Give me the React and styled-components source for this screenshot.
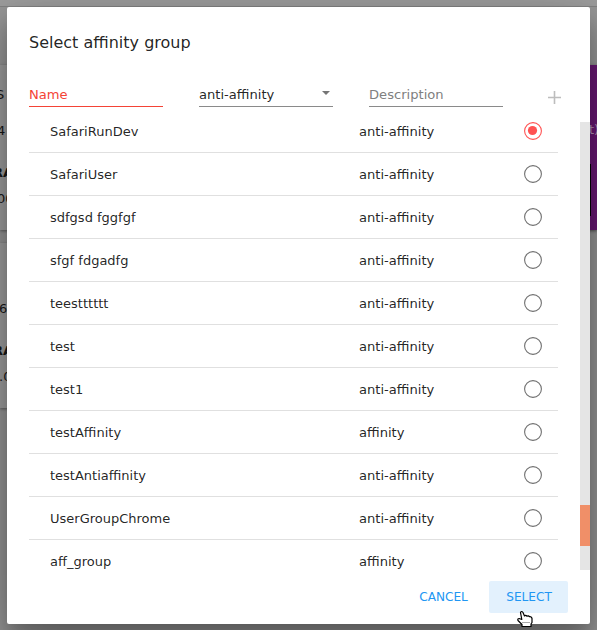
import React, { useState } from "react";
import styled, { createGlobalStyle, css } from "styled-components";

const GlobalStyle = createGlobalStyle`
  * { box-sizing: border-box; }
  html, body { margin: 0; height: 100%; overflow: hidden; }
  body { font-family: "DejaVu Sans", sans-serif; font-size: 13px; color: rgba(0, 0, 0, 0.87); }
`;

const Screen = styled.div`
  position: relative;
  width: 597px;
  height: 630px;
  overflow: hidden;
  background: #979797;
`;

const Page = styled.div`
  height: 100%;
  display: flex;
  flex-direction: column;
`;

const TopBar = styled.div`
  height: 7px;
  flex: none;
  background: #9c9c9c;
  border-bottom: 1px solid #828282;
`;

const Columns = styled.div`
  display: flex;
  justify-content: space-between;
  padding-top: 58px;
`;

const LeftColumn = styled.div`
  width: 40px;
  display: flex;
  flex-direction: column;
  gap: 13px;
`;

const Card = styled.div`
  height: 165px;
  padding-top: ${(p) => p.$top}px;
  background: #9f9f9f;
  box-shadow: 0 1px 3px rgba(0, 0, 0, 0.4);
  overflow: hidden;
`;

const CardLine = styled.div`
  height: ${(p) => p.$height}px;
  line-height: 16px;
  margin-left: ${(p) => p.$shift || 0}px;
  font-weight: ${(p) => (p.$bold ? 700 : 400)};
  color: #181818;
  white-space: nowrap;
`;

const PurpleCard = styled.div`
  width: 40px;
  height: 165px;
  padding: 57px 0 0 32px;
  background: #6a1875;
  box-shadow: 0 1px 3px rgba(0, 0, 0, 0.5);
  color: #b79abc;
  line-height: 16px;
  overflow: hidden;
`;

const CardBlock = styled.div`
  width: 2px;
  height: 52px;
  margin-top: 26px;
  background: #000;
`;

const Dialog = styled.div`
  position: absolute;
  left: 7px;
  top: 7px;
  width: 583px;
  height: 617px;
  display: flex;
  flex-direction: column;
  background: #fff;
  border-radius: 2px;
  box-shadow: 0 19px 60px rgba(0, 0, 0, 0.3), 0 15px 20px rgba(0, 0, 0, 0.22);
`;

const Title = styled.h1`
  margin: 0;
  height: 72px;
  padding: 25px 22px 0;
  font-size: 16px;
  font-weight: 400;
  line-height: 21px;
`;

const Form = styled.div`
  height: 43px;
  flex: none;
  padding: 0 22px;
  display: flex;
  align-items: flex-start;
  gap: 36px;
`;

const fieldText = css`
  width: 134px;
  height: 28px;
  padding: 4px 0 0;
  border: 0;
  font: 13.1px "DejaVu Sans", sans-serif;
`;

const Field = styled.input`
  ${fieldText}
  outline: none;
  background: none;
  border-bottom: 1px solid ${(p) => (p.$invalid ? "#f44336" : "#8a8a8a")};
  &::placeholder {
    color: ${(p) => (p.$invalid ? "#f44336" : "#808080")};
    opacity: 1;
  }
`;

const Select = styled.div`
  ${fieldText}
  display: flex;
  align-items: center;
  justify-content: space-between;
  padding-right: 3px;
  border-bottom: 1px solid #8a8a8a;
`;

const Caret = styled.i`
  margin-bottom: 3px;
  border: 4px solid transparent;
  border-top-color: #757575;
  border-bottom: 0;
`;

const AddButton = styled.button`
  width: 13px;
  height: 13px;
  margin: 12px 0 0 9px;
  padding: 0;
  border: 0;
  background: none;
  display: flex;
`;

const ListArea = styled.div`
  height: 448px;
  flex: none;
  display: flex;
  justify-content: space-between;
  overflow: hidden;
`;

const List = styled.div`
  width: 529px;
  margin: -12px 0 0 22px;
`;

const Row = styled.div`
  height: 43px;
  display: grid;
  grid-template-columns: 309px 165px 20px;
  align-items: center;
  padding-left: 21px;
  border-bottom: 1px solid #e0e0e0;
`;

const GroupType = styled.span`
  font-size: 13.1px;
`;

const Radio = styled.button`
  width: 18px;
  height: 18px;
  padding: 0;
  border: 0;
  background: none;
  display: flex;
  color: ${(p) => (p.$checked ? "#ff5252" : "#707070")};
`;

const Scrollbar = styled.div`
  width: 10px;
  padding-top: 383px;
  background: #e5e5e5;
`;

const Thumb = styled.div`
  height: 41px;
  background: #f08f68;
`;

const Actions = styled.div`
  display: flex;
  justify-content: flex-end;
  padding: 11px 22px 0;
`;

const Action = styled.button`
  width: ${(p) => p.$width}px;
  height: 32px;
  padding: 0 0 0 1px;
  border: 0;
  border-radius: 2px;
  background: ${(p) => (p.$active ? "#e3f1fd" : "transparent")};
  color: #2196f3;
  font: 12.1px "DejaVu Sans", sans-serif;
`;

const Pointer = styled.svg`
  position: absolute;
  left: 516px;
  top: 610px;
`;

const groups = [
  ["SafariRunDev", "anti-affinity"],
  ["SafariUser", "anti-affinity"],
  ["sdfgsd fggfgf", "anti-affinity"],
  ["sfgf fdgadfg", "anti-affinity"],
  ["teestttttt", "anti-affinity"],
  ["test", "anti-affinity"],
  ["test1", "anti-affinity"],
  ["testAffinity", "affinity"],
  ["testAntiaffinity", "anti-affinity"],
  ["UserGroupChrome", "anti-affinity"],
  ["aff_group", "affinity"],
];

export default function App() {
  const [selected, setSelected] = useState(0);
  return (
    <Screen>
      <GlobalStyle />
      <Page>
        <TopBar />
        <Columns>
          <LeftColumn>
            <Card $top={22}>
              <CardLine $height={36} $shift={-4}>S</CardLine>
              <CardLine $height={42} $shift={-3}>4</CardLine>
              <CardLine $height={26} $shift={-7} $bold>RAM</CardLine>
              <CardLine $height={20} $shift={-3}>00</CardLine>
            </Card>
            <Card $top={58}>
              <CardLine $height={42} $shift={-1}>6</CardLine>
              <CardLine $height={26} $shift={-7} $bold>RAM</CardLine>
              <CardLine $height={20} $shift={-1}>.0</CardLine>
            </Card>
          </LeftColumn>
          <PurpleCard>
            t)
            <CardBlock />
          </PurpleCard>
        </Columns>
      </Page>
      <Dialog>
        <Title>Select affinity group</Title>
        <Form>
          <Field placeholder="Name" $invalid />
          <Select>anti-affinity<Caret /></Select>
          <Field placeholder="Description" />
          <AddButton aria-label="Add">
            <svg width="13" height="13" viewBox="0 0 13 13">
              <path d="M6.5 0v13M0 6.5h13" stroke="#bdbdbd" strokeWidth="1.6" />
            </svg>
          </AddButton>
        </Form>
        <ListArea>
          <List>
            {groups.map(([name, type], i) => (
              <Row key={name}>
                <span>{name}</span>
                <GroupType>{type}</GroupType>
                <Radio $checked={i === selected} onClick={() => setSelected(i)} aria-label={name}>
                  <svg width="18" height="18" viewBox="0 0 18 18">
                    <circle cx="9" cy="9" r="8.4" fill="none" stroke="currentColor" strokeWidth="1.1" />
                    {i === selected && <circle cx="8.5" cy="8.5" r="4.6" fill="currentColor" />}
                  </svg>
                </Radio>
              </Row>
            ))}
          </List>
          <Scrollbar><Thumb /></Scrollbar>
        </ListArea>
        <Actions>
          <Action $width={92}>CANCEL</Action>
          <Action $width={79} $active>SELECT</Action>
        </Actions>
      </Dialog>
      <Pointer width="18" height="18" viewBox="0 0 18 18">
        <path
          d="M4.5 2.5Q5.5.5 7 2.5L8.5 6Q9.5 4.8 11 6.2Q12.3 5.2 13.4 6.7Q15.5 6.2 16 8.5V12.5L15 14V16.5H6V14.5L2 10.5Q1.2 8.5 3.2 8.5L5.8 9.5Z"
          fill="#fff" stroke="#000" strokeWidth="1.2" strokeLinejoin="round"
        />
        <path d="M6.5 12.5h8" stroke="#555" strokeDasharray="1 1" />
      </Pointer>
    </Screen>
  );
}
